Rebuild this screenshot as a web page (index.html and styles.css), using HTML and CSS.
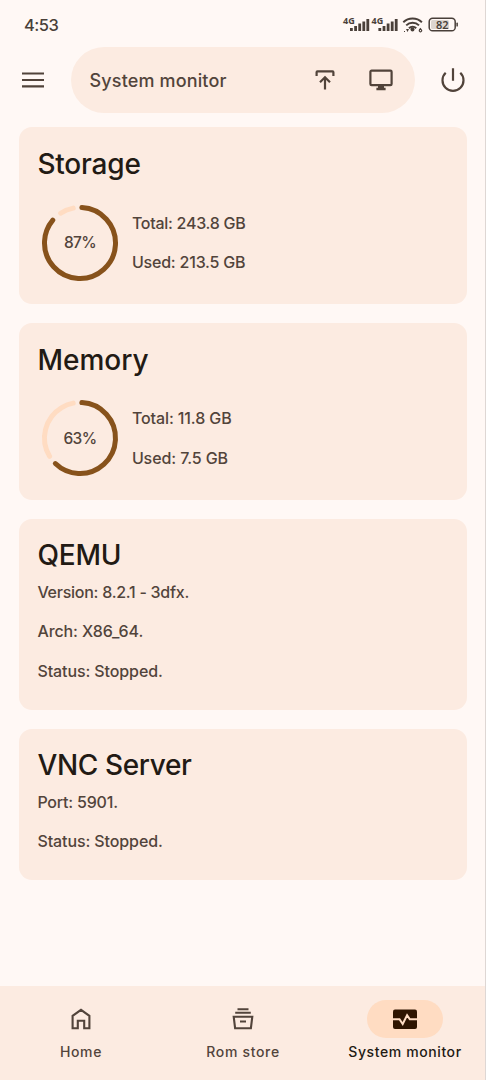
FILE: index.html
```html
<!DOCTYPE html>
<html lang="en">
<head>
<meta charset="utf-8">
<title>System monitor</title>
<link rel="stylesheet" href="styles.css">
</head>
<body>
<div class="screen">
  <header class="status">
    <span class="clock">4:53</span>
    <svg class="status-icons" width="118" height="24" viewBox="342 12 118 24">
      <g fill="#493f39">
        <text class="net" x="343" y="24">4G</text>
        <text class="net" x="371.5" y="24">4G</text>
        <g id="bars"><rect x="350" y="28" width="2.8" height="3"/><rect x="354.2" y="26" width="2.8" height="5"/><rect x="358.3" y="23.5" width="2.8" height="7.5"/><rect x="362.4" y="21.5" width="2.8" height="9.5"/><rect x="366.4" y="19" width="2.8" height="12"/></g>
        <use href="#bars" x="28.4"/>
        <circle cx="412.5" cy="29.5" r="2"/>
        <path d="M406 29l3 0-1.500 3zM404 31h1v1h-1z"/>
      </g>
      <g fill="none" stroke="#493f39" stroke-width="2">
        <path d="M403.300 22.300a13.500 13.500 0 0 1 18.600 0M406.200 25.400a9.200 9.200 0 0 1 12.800 0M409 28.200a5 5 0 0 1 7.200 0"/>
        <path d="M421 28.200q-1.800 1-1.700 2.300a1.200 1.200 0 1 0 .7-1" stroke-width="1.2"/>
        <rect x="429.200" y="18.300" width="26" height="12.500" rx="3.400" stroke-width="1.500"/>
      </g>
      <rect x="431" y="20" width="18" height="9" rx="1.500" fill="#ddd5d0"/>
      <rect x="456.400" y="22.600" width="1.500" height="4" rx=".7" fill="#493f39"/>
      <text class="level" x="442.200" y="28.600">82</text>
    </svg>
  </header>
  <div class="toolbar">
    <svg class="menu" width="22" height="22" viewBox="0 0 22 22"><path d="M0 4.500h22M0 11h22M0 17.400h22"/></svg>
    <div class="pill">
      <span class="pill-title">System monitor</span>
      <svg class="upload" width="20" height="22" viewBox="0 0 20 22"><path d="M1.600 7V3.200q0-.8.8-.8h15.200q.8 0 .8.800V7M10 20.500V9M5 13.300L10 8.300l5 5"/></svg>
      <svg class="display" width="24" height="24" viewBox="0 0 24 24"><rect x="1.400" y="2.600" width="21.200" height="14.600" rx="1.200"/><path d="M9 17.500h6v2.300h1.600v2.500H7.400v-2.500H9z" class="solid"/></svg>
    </div>
    <svg class="power" width="26" height="26" viewBox="0 0 26 26"><path d="M13 1.200v12.600M5.700 5.800a10.500 10.500 0 1 0 14.600 0"/></svg>
  </div>
  <main class="cards">
    <section class="card">
      <h2 class="t-storage">Storage</h2>
      <div class="usage">
        <div class="gauge">
          <svg width="84" height="84" viewBox="-42 -42 84 84">
            <circle class="track" r="35.500" pathLength="360" stroke-dasharray="22 338" transform="rotate(237)"/>
            <circle class="value" r="35.500" pathLength="360" stroke-dasharray="307 53" transform="rotate(-87)"/>
          </svg>
          <span class="percent">87%</span>
        </div>
        <div class="figures"><p class="l-total1">Total: 243.8 GB</p><p class="l-used1">Used: 213.5 GB</p></div>
      </div>
    </section>
    <section class="card">
      <h2 class="t-memory">Memory</h2>
      <div class="usage">
        <div class="gauge">
          <svg width="84" height="84" viewBox="-42 -42 84 84">
            <circle class="track" r="35.500" pathLength="360" stroke-dasharray="110 250" transform="rotate(149)"/>
            <circle class="value" r="35.500" pathLength="360" stroke-dasharray="221 139" transform="rotate(-87)"/>
          </svg>
          <span class="percent">63%</span>
        </div>
        <div class="figures"><p class="l-total2">Total: 11.8 GB</p><p class="l-used2">Used: 7.5 GB</p></div>
      </div>
    </section>
    <section class="card card-qemu">
      <h2 class="t-qemu">QEMU</h2>
      <p class="l-version">Version: 8.2.1 - 3dfx.</p>
      <p class="l-arch">Arch: X86_64.</p>
      <p class="l-status">Status: Stopped.</p>
    </section>
    <section class="card card-vnc">
      <h2 class="t-vnc">VNC Server</h2>
      <p class="l-port">Port: 5901.</p>
      <p class="l-status">Status: Stopped.</p>
    </section>
  </main>
  <nav class="nav">
    <a class="item">
      <span class="icon"><svg width="24" height="24" viewBox="0 0 24 24"><path class="line" d="M3.600 21.200V8.900L12 2.900l8.400 6v12.300h-5.200v-7.400H8.800v7.400z"/></svg></span>
      <span class="n-home">Home</span>
    </a>
    <a class="item">
      <span class="icon"><svg width="24" height="24" viewBox="0 0 24 24"><path class="line" d="M6.500 2.300h11M4.200 5.800h15.600M2.700 9.700h18.600l-1.400 11.500H4.100zM9 14.500h6"/></svg></span>
      <span class="n-store">Rom store</span>
    </a>
    <a class="item active">
      <span class="icon"><svg width="26" height="24" viewBox="0 0 26 24"><rect x="1" y="2.500" width="24" height="19.500" rx="2" fill="#2f1500"/><path class="pulse" d="M1 12.200h6.500l3.200 4.800 4.400-8.800 2.700 4H25"/></svg></span>
      <span class="n-monitor">System monitor</span>
    </a>
  </nav>
</div>
</body>
</html>
```
FILE: styles.css
```css
* { box-sizing: border-box; }
body { margin: 0; background: #fff8f5; font-family: Inter, sans-serif; color: #52443b; }
.screen { display: flex; flex-direction: column; width: 486px; height: 1080px; border-right: 1px solid #ded7d4; }
svg { display: block; flex: none; }
h2, p { margin: 0; white-space: nowrap; }
.status { display: flex; justify-content: space-between; height: 47px; padding: 12px 25px 0 24px; }
.clock { font-size: 16.5px; line-height: 26px; font-weight: 450; color: #493f39; letter-spacing: -0.5px; }
.net { font: 700 9px "Noto Sans", sans-serif; }
.level { font: 600 11px "Noto Sans", sans-serif; fill: #493f39; text-anchor: middle; }
.toolbar { display: flex; align-items: center; height: 66px; padding-left: 22px; }
.toolbar path, .toolbar rect { fill: none; stroke: #51433a; stroke-width: 2.2; }
.toolbar .solid { fill: #51433a; stroke: none; }
.pill { display: flex; align-items: center; width: 344px; height: 66px; margin-left: 27px; padding-left: 18.5px; border-radius: 33px; background: #fcebe1; }
.pill-title { width: 225px; font-size: 18px; font-weight: 450; letter-spacing: 0.15px; white-space: nowrap; }
.display { margin-left: 34.5px; }
.power { margin-left: 24.5px; }
.cards { display: flex; flex-direction: column; gap: 19px; padding: 14.4px 18px 0 19px; }
.card { height: 176.6px; padding: 18.6px 18.4px; border-radius: 13px; background: #fcebe1; }
.card-qemu { height: 191px; }
.card-vnc { height: 151px; }
h2 { font-size: 28px; line-height: 36px; font-weight: 500; color: #221a14; }
p { font-size: 16px; line-height: 20px; height: 39.4px; padding-top: 8.8px; font-weight: 450; }
.t-storage { letter-spacing: -0.2px; }
.t-qemu { letter-spacing: -0.2px; }
.t-vnc { letter-spacing: -0.35px; }
.l-total1 { letter-spacing: -0.27px; }
.l-used1 { letter-spacing: -0.2px; }
.l-total2, .l-used2 { letter-spacing: -0.1px; }
.l-version { letter-spacing: -0.26px; }
.l-arch, .l-status { letter-spacing: -0.1px; }
.l-port { letter-spacing: -0.2px; }
.usage { display: flex; align-items: center; height: 84px; margin-top: 18.6px; }
.gauge { display: grid; place-items: center; width: 84px; margin-left: 0.6px; }
.gauge > * { grid-area: 1 / 1; }
.gauge circle { fill: none; stroke-width: 5; stroke-linecap: round; }
.gauge .track { stroke: #ffdcc2; }
.gauge .value { stroke: #87521b; }
.percent { font-size: 15.5px; font-weight: 450; letter-spacing: -0.6px; }
.figures { height: 79px; margin-left: 9.9px; }
.figures p { padding-top: 9.8px; }
.nav { display: grid; grid-template-columns: repeat(3, 162px); height: 94px; margin-top: auto; padding-top: 14px; background: #fcebe1; }
.item { display: flex; flex-direction: column; align-items: center; gap: 4px; font-size: 14px; line-height: 20px; font-weight: 500; white-space: nowrap; }
.n-home { letter-spacing: 0.65px; }
.n-store { letter-spacing: 0.68px; }
.n-monitor { letter-spacing: 0.6px; }
.icon { display: grid; place-items: center; width: 76px; height: 38px; border-radius: 19px; }
.active { color: #221a14; }
.active .icon { background: #ffdcc2; }
.line { fill: none; stroke: #52443b; stroke-width: 2.1; }
.pulse { fill: none; stroke: #ffdcc2; stroke-width: 2; }
```
